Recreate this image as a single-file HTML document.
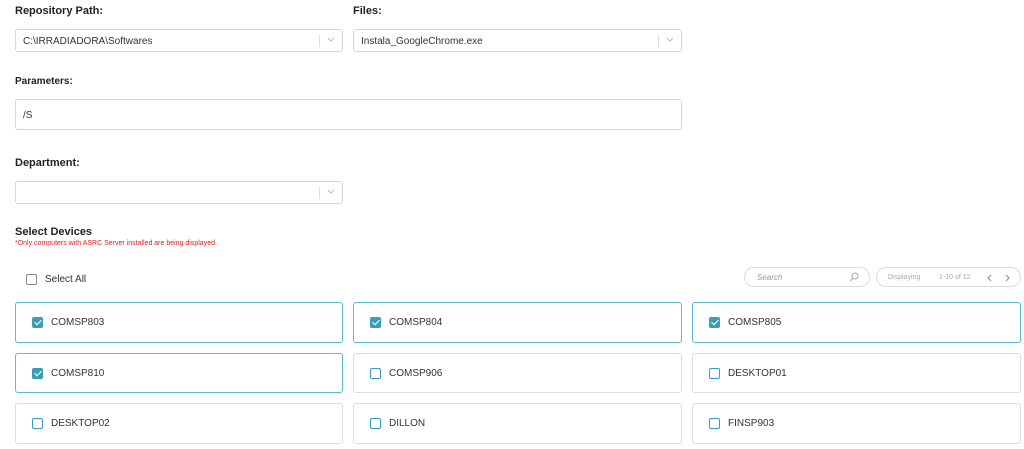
<!DOCTYPE html>
<html><head><style>
body{margin:0;width:1024px;height:449px;background:#fff;font-family:"Liberation Sans",sans-serif;position:relative;overflow:hidden;color:#222}
.a{position:absolute}
.lbl{font-size:11px;font-weight:bold;color:#222}
.inp{position:absolute;border:1px solid #d6d6d6;border-radius:3px;height:23px;box-sizing:border-box;font-size:10px;line-height:23px;padding-left:7px;color:#333;background:#fff}
.sep{position:absolute;right:22px;top:5px;width:1px;height:12px;background:#ddd}
.chev{position:absolute;right:7px;top:7px}
.card{position:absolute;width:328px;height:41px;box-sizing:border-box;border:1px solid #ddd;border-radius:3px;font-size:10px;color:#333}
.card.on{border-color:#5bbccc}
.cb{position:absolute;left:16px;top:14px;width:11px;height:11px;box-sizing:border-box;border:1.5px solid #3a9fb5;border-radius:2px}
.on .cb{background:#3a9fb5}
.on .cb:after{content:"";position:absolute;left:2.5px;top:0px;width:3px;height:6px;border:solid #fff;border-width:0 1.5px 1.5px 0;transform:rotate(45deg)}
.card span{position:absolute;left:35px;top:14px}
</style></head><body>
<div class="a lbl" style="left:15px;top:5px">Repository Path:</div>
<div class="a lbl" style="left:353px;top:5px">Files:</div>
<div class="inp" style="left:15px;top:29px;width:328px">C:\IRRADIADORA\Softwares<div class="sep"></div><svg class="chev" width="8" height="6"><path d="M1 1L4 4L7 1" stroke="#bbb" fill="none"/></svg></div>
<div class="inp" style="left:353px;top:29px;width:329px">Instala_GoogleChrome.exe<div class="sep"></div><svg class="chev" width="8" height="6"><path d="M1 1L4 4L7 1" stroke="#bbb" fill="none"/></svg></div>
<div class="a lbl" style="left:15px;top:76px;font-size:10px">Parameters:</div>
<div class="inp" style="left:15px;top:99px;width:667px;height:31px;line-height:31px">/S</div>
<div class="a lbl" style="left:15px;top:157px">Department:</div>
<div class="inp" style="left:15px;top:181px;width:328px"><div class="sep"></div><svg class="chev" width="8" height="6"><path d="M1 1L4 4L7 1" stroke="#bbb" fill="none"/></svg></div>
<div class="a lbl" style="left:15px;top:226px">Select Devices</div>
<div class="a" style="left:15px;top:240px;font-size:7px;color:#e02020">*Only computers with ASRC Server installed are being displayed.</div>
<div class="a" style="left:26px;top:274px;width:11px;height:11px;border:1.5px solid #888;border-radius:2px;box-sizing:border-box"></div>
<div class="a" style="left:45px;top:274px;font-size:10px;color:#333">Select All</div>
<div class="a" style="left:744px;top:267px;width:126px;height:20px;border:1px solid #ddd;border-radius:10px;box-sizing:border-box;font-size:8px;color:#999;font-style:italic;padding:5px 12px">Search<svg style="position:absolute;right:10px;top:4px" width="10" height="10"><circle cx="6" cy="4" r="3" stroke="#aaa" fill="none"/><path d="M4 6L1 9" stroke="#aaa"/></svg></div>
<div class="a" style="left:876px;top:267px;width:145px;height:20px;border:1px solid #ddd;border-radius:10px;box-sizing:border-box;font-size:7px;color:#aaa;padding:6px 11px">Displaying<span style="position:absolute;left:62px">1-10 of 12</span><svg style="position:absolute;left:110px;top:6px" width="24" height="8"><path d="M4 1L1 4L4 7M19 1L22 4L19 7" stroke="#888" fill="none"/></svg></div>
<div class="card on" style="left:15px;top:302px"><div class="cb"></div><span>COMSP803</span></div>
<div class="card on" style="left:353px;top:302px;width:329px"><div class="cb"></div><span>COMSP804</span></div>
<div class="card on" style="left:692px;top:302px;width:329px"><div class="cb"></div><span>COMSP805</span></div>
<div class="card on" style="left:15px;top:353px;height:40px"><div class="cb"></div><span>COMSP810</span></div>
<div class="card" style="left:353px;top:353px;width:329px;height:40px"><div class="cb"></div><span>COMSP906</span></div>
<div class="card" style="left:692px;top:353px;width:329px;height:40px"><div class="cb"></div><span>DESKTOP01</span></div>
<div class="card" style="left:15px;top:403px"><div class="cb"></div><span>DESKTOP02</span></div>
<div class="card" style="left:353px;top:403px;width:329px"><div class="cb"></div><span>DILLON</span></div>
<div class="card" style="left:692px;top:403px;width:329px"><div class="cb"></div><span>FINSP903</span></div>
</body></html>
